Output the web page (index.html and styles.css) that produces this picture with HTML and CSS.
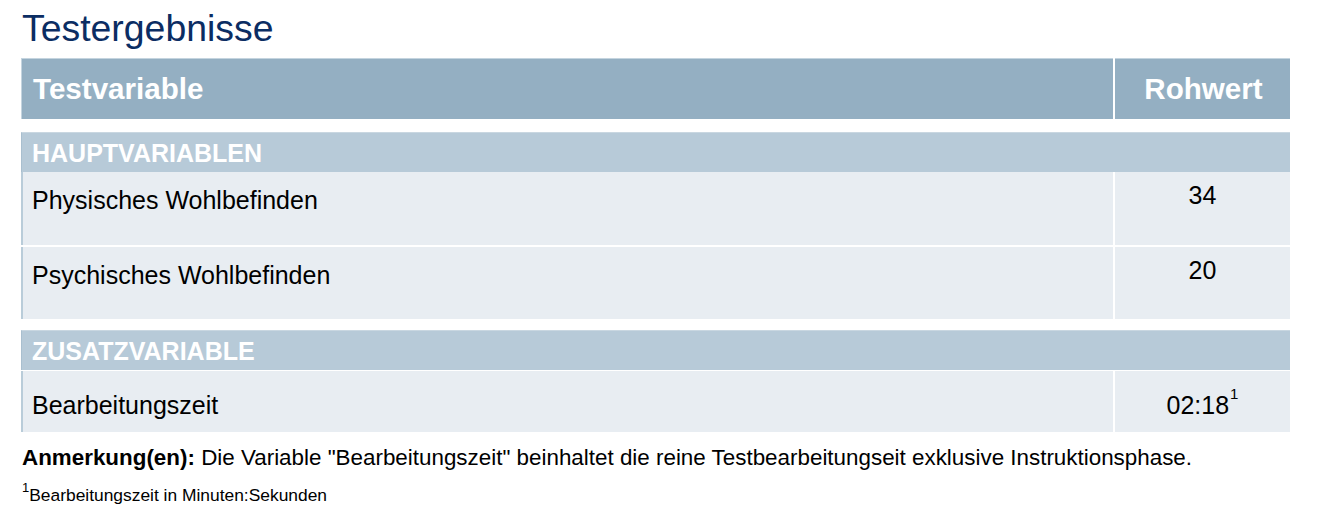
FILE: index.html
```html
<!DOCTYPE html>
<html lang="de">
<head>
<meta charset="utf-8">
<title>Testergebnisse</title>
<link rel="stylesheet" href="styles.css">
</head>
<body>
<main class="page">
  <h1 class="title">Testergebnisse</h1>
  <div class="results">
    <div class="head">
      <div class="head-cell head-var">Testvariable</div>
      <div class="head-cell head-val">Rohwert</div>
    </div>
    <section class="group">
      <div class="group-title">HAUPTVARIABLEN</div>
      <div class="row row-tall row-first">
        <div class="label">Physisches Wohlbefinden</div>
        <div class="value">34</div>
      </div>
      <div class="row row-tall">
        <div class="label">Psychisches Wohlbefinden</div>
        <div class="value">20</div>
      </div>
    </section>
    <section class="group group-second">
      <div class="group-title">ZUSATZVARIABLE</div>
      <div class="row row-short">
        <div class="label">Bearbeitungszeit</div>
        <div class="value">02:18<sup class="value-sup">1</sup></div>
      </div>
    </section>
  </div>
  <p class="note"><strong class="note-key">Anmerkung(en):</strong> Die Variable "Bearbeitungszeit" beinhaltet die reine Testbearbeitungseit exklusive Instruktionsphase.</p>
  <p class="footnote"><sup class="footnote-sup">1</sup>Bearbeitungszeit in Minuten:Sekunden</p>
</main>
</body>
</html>
```
FILE: styles.css
```css
* {
  box-sizing: border-box;
}

html, body {
  margin: 0;
  padding: 0;
  background: #ffffff;
}

body {
  font-family: "Liberation Sans", Arial, sans-serif;
  color: #000000;
}

.page {
  padding: 7px 0 0 21px;
  width: 1290px;
}

.title {
  margin: 0 0 8px 1px;
  font-size: 37.4px;
  line-height: 43px;
  font-weight: normal;
  color: #0b2d63;
}

.results {
  width: 1269px;
}

.head {
  display: grid;
  grid-template-columns: 1fr 175px;
  column-gap: 2px;
  height: 61px;
}

.head-cell {
  background: #94afc2;
  color: #ffffff;
  font-weight: bold;
  font-size: 29.6px;
  display: flex;
  align-items: center;
  border-top: 1px solid #c4d4df;
}

.head-var {
  border-left: 1px solid #c4d4df;
  padding-left: 11px;
}

.head-val {
  justify-content: center;
  padding-left: 2px;
}

.group {
  margin-top: 13px;
  display: flex;
  flex-direction: column;
  row-gap: 2px;
}

.group-second {
  margin-top: 11px;
  row-gap: 1px;
}

.group-title {
  height: 40px;
  margin-bottom: -2px;
  background: #b7cad8;
  border-left: 1px solid #a9bfcf;
  border-top: 1px solid #c9d7e1;
  color: #ffffff;
  font-weight: bold;
  font-size: 25px;
  display: flex;
  align-items: center;
  padding: 1px 0 0 10px;
}

.group-second .group-title {
  margin-bottom: 0;
}

.row {
  display: grid;
  grid-template-columns: 1fr 175px;
  column-gap: 2px;
  font-size: 25px;
  line-height: 29px;
}

.row-tall {
  height: 72px;
}

.row-first {
  height: 73px;
}

.row-short {
  height: 61px;
}

.label,
.value {
  background: #e8edf2;
}

.label {
  border-left: 2px solid #b9ccd9;
  padding: 14px 0 0 9px;
}

.value {
  text-align: center;
  padding: 9px 0 0 0;
}

.row-short .label,
.row-short .value {
  padding-top: 20px;
}

.value-sup {
  font-size: 15px;
  line-height: 0;
  vertical-align: 15px;
  margin-left: 1px;
}

.note {
  margin: 13px 0 0 1px;
  font-size: 22.4px;
  line-height: 25px;
}

.note-key {
  font-weight: bold;
}

.footnote {
  margin: 15px 0 0 1px;
  font-size: 17.4px;
  line-height: 20px;
}

.footnote-sup {
  font-size: 13px;
  line-height: 0;
  vertical-align: 9px;
}
```
